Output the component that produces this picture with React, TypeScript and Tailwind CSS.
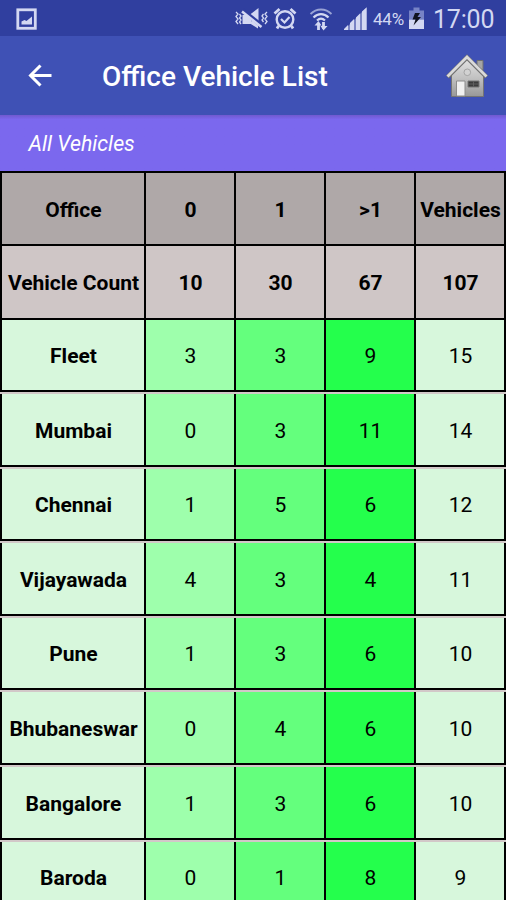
import React from 'react';
import clsx from 'clsx';

interface OfficeRow {
  office: string;
  counts: [number, number, number];
  total: number;
}

const rows: OfficeRow[] = [
  { office: 'Fleet', counts: [3, 3, 9], total: 15 },
  { office: 'Mumbai', counts: [0, 3, 11], total: 14 },
  { office: 'Chennai', counts: [1, 5, 6], total: 12 },
  { office: 'Vijayawada', counts: [4, 3, 4], total: 11 },
  { office: 'Pune', counts: [1, 3, 6], total: 10 },
  { office: 'Bhubaneswar', counts: [0, 4, 6], total: 10 },
  { office: 'Bangalore', counts: [1, 3, 6], total: 10 },
  { office: 'Baroda', counts: [0, 1, 8], total: 9 },
];

const GRID = 'grid grid-cols-[146px_90px_90px_90px_90px]';

function StatusBar() {
  return (
    <div className="flex h-9 shrink-0 items-center bg-[#303f9f] text-[#d3d8f2]">
      <svg className="mt-0.5 ml-4 h-[22px] w-[21px]" viewBox="0 0 21 22">
        <rect x="1.8" y="1.8" width="17.500" height="18.500" fill="none" stroke="currentColor" strokeWidth="2.800" />
        <path d="M5.500 16.500v-3l3-1.500 2 1 5.500-4.500v8z" fill="currentColor" />
      </svg>

      {/* vibrate / muted */}
      <svg className="ml-[197px] h-6 w-[35px]" viewBox="0 0 35 24" fill="none" stroke="currentColor">
        <path d="M2 6l2 2-2 2.500 2 2.500-2 2.500 2 2.500M5.500 8l1.500 2-1.500 2 1.500 2-1.500 2 1.500 2M33 6l-2 2 2 2.500-2 2.500 2 2.500-2 2.500M29.500 8l-1.500 2 1.500 2-1.500 2 1.500 2" strokeWidth="1.300" />
        <path d="M8.500 9h4l5 5v4h-9zM16 8.500l8.500-6.500v17z" fill="currentColor" stroke="none" />
        <path d="M9 4l19 15" stroke="#303f9f" strokeWidth="3" />
        <path d="M8 5.500l19.500 15.500" strokeWidth="2.500" />
        <path d="M16 17.500l8 5v-3l-6-5z" fill="currentColor" stroke="none" />
      </svg>

      {/* alarm */}
      <svg className="ml-[4px] h-6 w-6" viewBox="0 0 24 24" fill="none" stroke="currentColor">
        <circle cx="12" cy="13.500" r="8.300" strokeWidth="2.400" />
        <path d="M1.500 7.500l5-4.500M22.500 7.500l-5-4.500M5.500 20L4 22.500M18.500 20l1.500 2.500" strokeWidth="2.800" />
        <path d="M8 13l3.500 3.500 5-5.500" strokeWidth="2.200" />
      </svg>

      {/* wifi */}
      <svg className="mt-0.5 ml-3 h-6 w-6" viewBox="0 0 24 24" fill="none" stroke="currentColor">
        <path d="M1.500 7c6-6 15-6 21 0" strokeWidth="1.800" opacity=".65" />
        <path d="M4.500 10.500c4.500-4.500 10.500-4.500 15 0M8 13.500c2.500-2.300 5.500-2.300 8 0" strokeWidth="2.200" />
        <path d="M9.500 23v-7M14.500 15v7" strokeWidth="2.800" />
        <path d="M5.500 18.500l4-4.500 3 4.500zM11.500 19l3 4.500 4-4.500z" fill="currentColor" stroke="none" />
      </svg>

      {/* signal */}
      <svg className="ml-[10px] h-6 w-6" viewBox="0 0 24 24" fill="currentColor">
        <path d="M1 24l23-23v23z" opacity=".45" />
        <path d="M1 24v-1l4-4v5zM7 24v-7l4-4v11zM13 24V11.500l4-4V24zM19 24V5.500l4.500-4V24z" />
      </svg>

      <span className="mt-1 ml-[6px] w-8 text-[17px] tracking-[-0.2px]">44%</span>

      {/* battery */}
      <svg className="mt-px ml-1 h-[23px] w-[15px]" viewBox="0 0 15 23">
        <path d="M4.500 0.500h6v3H15v9H0v-9h4.500z" fill="#7783c6" />
        <path d="M0 12.500h15V22H0z" fill="currentColor" />
        <path d="M6 6h5L8.500 10H12L4.500 18.500 6.500 12.500H3.500z" fill="#10131f" />
      </svg>

      <span className="mt-1 ml-[9px] text-[25px] leading-9 tracking-[-0.2px]">17:00</span>
    </div>
  );
}

function HouseIcon() {
  return (
    <svg className="h-11 w-11" viewBox="0 0 44 44">
      <defs>
        <linearGradient id="wall" x1="0" y1="0" x2="0" y2="1">
          <stop offset="0" stopColor="#e2e2e2" />
          <stop offset="0.5" stopColor="#c2c2c2" />
          <stop offset="1" stopColor="#989898" />
        </linearGradient>
      </defs>
      <path d="M32 6.500h6v10l-6-5z" fill="#a5a5a5" stroke="#707070" />
      <path d="M6.500 20L22 5l16.500 15v22.500h-32z" fill="url(#wall)" stroke="#747474" />
      <path d="M2.500 23L22 3.500 41.500 23" fill="none" stroke="#707070" strokeWidth="4.500" />
      <path d="M2.500 22.500L22 3l19.500 19.500" fill="none" stroke="#dadada" strokeWidth="2.800" />
      <circle cx="22.300" cy="18.300" r="3.300" fill="#d2d2d2" stroke="#a5a5a5" />
      <path d="M11.500 27h8.500v15h-8.500z" fill="#f0f0f0" stroke="#8c8c8c" />
      <path d="M23 27h11v6H23z" fill="#3c3c3c" stroke="#777" />
      <path d="M23.500 30h10M28.500 27.500v5" stroke="#666" strokeWidth=".8" />
    </svg>
  );
}

function Cell({ children, className }: { children: React.ReactNode; className?: string }) {
  return (
    <div className={clsx('flex items-center justify-center border-r-2 border-black pt-1 pl-px whitespace-nowrap', className)}>
      {children}
    </div>
  );
}

export default function App() {
  return (
    <div className="flex h-[900px] w-[506px] flex-col overflow-hidden bg-[#d2c8c8] font-[Roboto,sans-serif]">
      <StatusBar />

      <header className="flex h-[79px] shrink-0 items-center bg-[#3f51b5] text-white">
        <svg className="ml-7 h-6 w-6" viewBox="0 0 24 24" fill="none" stroke="currentColor" strokeWidth="3">
          <path d="M12.500 1.500L2.500 11.500l10 10M2.500 11.500h21" />
        </svg>
        <h1 className="mt-0.5 ml-[50px] text-[28px] font-medium">Office Vehicle List</h1>
        <div className="mr-[17px] ml-auto">
          <HouseIcon />
        </div>
      </header>

      <div className="flex h-14 shrink-0 items-center bg-[#7b68ee] bg-linear-to-b from-[#7059d0] from-0% to-[#7b68ee] to-8% pt-0.5 pl-[28.5px] text-[21.3px] text-white italic">
        All Vehicles
      </div>

      <div className="flex flex-col text-[21px] text-black">
        <div className={clsx(GRID, 'h-[75px] border-y-2 border-black bg-[#afa8a8] font-bold')}>
          <Cell className="border-l-2">Office</Cell>
          <Cell>0</Cell>
          <Cell>1</Cell>
          <Cell>&gt;1</Cell>
          <Cell>Vehicles</Cell>
        </div>
        <div className={clsx(GRID, 'h-[73.5px] border-b-2 border-black bg-[#cfc6c6] font-bold')}>
          <Cell className="border-l-2">Vehicle Count</Cell>
          <Cell>10</Cell>
          <Cell>30</Cell>
          <Cell>67</Cell>
          <Cell>107</Cell>
        </div>

        {rows.map((row) => (
          <div key={row.office} className="h-[74.6px] shrink-0">
            <div className={clsx(GRID, 'h-[72.5px] border-b-2 border-black')}>
              <Cell className="border-l-2 bg-[#d7f7dc] font-bold">{row.office}</Cell>
              <Cell className="bg-[#9effac]">{row.counts[0]}</Cell>
              <Cell className="bg-[#64ff7d]">{row.counts[1]}</Cell>
              <Cell className="bg-[#24ff4c]">{row.counts[2]}</Cell>
              <Cell className="bg-[#d7f7dc]">{row.total}</Cell>
            </div>
          </div>
        ))}
      </div>
    </div>
  );
}
